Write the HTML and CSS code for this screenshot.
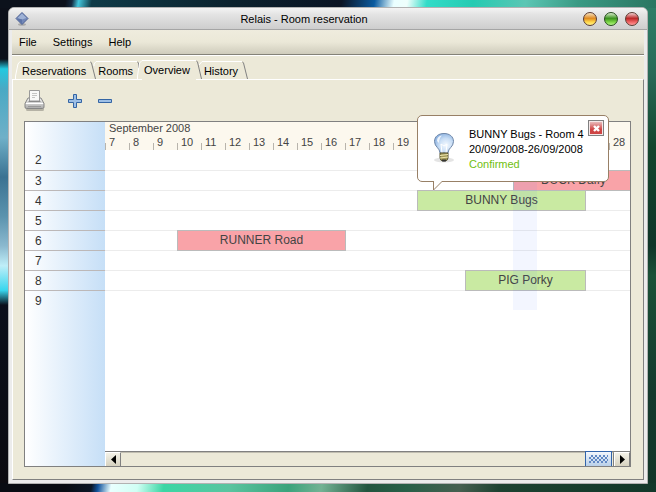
FILE: index.html
```html
<!DOCTYPE html>
<html lang="en">
<head>
<meta charset="utf-8">
<title>Relais - Room reservation</title>
<link rel="stylesheet" href="styles.css">
</head>
<body>
<main class="window">
  <header class="titlebar">
    <svg class="app-icon" width="14" height="14" viewBox="0 0 14 14" aria-hidden="true">
      <ellipse cx="7" cy="12.5" rx="4" ry="1.3" fill="#a9a9a9"/>
      <path d="M7 .5 13 6.500 7 12.500 1 6.500Z" fill="#7388b8" stroke="#4a5f92"/>
      <path d="M7 1.500 11.500 6 7 7.500 2.500 6Z" fill="#9fb2d6"/>
      <path d="M7 7.500V12L2 6.500Z" fill="#5d74a8"/>
    </svg>
    <h1 class="title">Relais - Room reservation</h1>
    <div class="controls">
      <button class="orb amber" aria-label="Minimize"></button>
      <button class="orb green" aria-label="Maximize"></button>
      <button class="orb red" aria-label="Close"></button>
    </div>
  </header>
  <div class="frame">
    <nav class="menubar">
      <button>File</button>
      <button>Settings</button>
      <button>Help</button>
    </nav>
    <div class="tabs">
      <svg width="5" height="18" viewBox="0 0 5 18" aria-hidden="true"><path d="M.5 18V15L3 3 5 .5" fill="none" stroke="#fff"/></svg>
      <button class="tab">Reservations</button>
      <svg width="6" height="18" viewBox="0 0 6 18" aria-hidden="true"><path d="M4 5V3L6 .5" fill="none" stroke="#fff"/><path d="M0 .5 1.500 2 5.500 18" fill="none" stroke="#808080"/></svg>
      <button class="tab">Rooms</button>
      <svg width="5" height="19" viewBox="0 0 5 19" aria-hidden="true"><path d="M0 1.500 1.500 3V8" fill="none" stroke="#808080"/><path d="M.5 19V16L2.500 3 5 .5" fill="none" stroke="#fff"/></svg>
      <button class="tab active">Overview</button>
      <svg width="6" height="19" viewBox="0 0 6 19" aria-hidden="true"><path d="M3 5 6 1.500" fill="none" stroke="#fff"/><path d="M0 .5 1.500 2 5.500 19" fill="none" stroke="#808080"/></svg>
      <button class="tab">History</button>
      <svg width="6" height="18" viewBox="0 0 6 18" aria-hidden="true"><path d="M0 .5 1.500 2 5.500 18" fill="none" stroke="#808080"/></svg>
    </div>
    <section class="panel">
      <div class="toolbar">
        <button class="tool" aria-label="Print">
          <svg width="22" height="22" viewBox="0 0 22 22">
            <defs><linearGradient id="metal" x2="0" y2="1"><stop offset="0" stop-color="#f4f4f4"/><stop offset="1" stop-color="#aaa"/></linearGradient></defs>
            <rect x="2" y="18" width="18" height="3" rx="1.500" fill="#b5b2a5"/>
            <path d="M4 8 1 13.500V17Q1 18.500 2.500 18.500H18.500Q20 18.500 20 17V13.500L17 8Z" fill="url(#metal)" stroke="#858585"/>
            <path d="M5.500 11V.5H15.500V11Z" fill="#f8f8f8" stroke="#999"/>
            <path d="M8 3.500H13M8 5.500H13M8 7.500H11" stroke="#c4c4c4"/>
            <path d="M4.500 11.500H16.500" stroke="#8a8a8a"/>
            <path d="M2 13.500H19" stroke="#fff"/>
            <path d="M4 16.500H17" stroke="#999"/>
          </svg>
        </button>
        <button class="tool zoom-in" aria-label="Zoom in">
          <svg width="14" height="14" viewBox="0 0 14 14"><path d="M5.500.5H8.500V5.500H13.500V8.500H8.500V13.500H5.500V8.500H.5V5.500H5.500Z" fill="#9dbfe6" stroke="#3465a4"/></svg>
        </button>
        <button class="tool zoom-out" aria-label="Zoom out">
          <svg width="14" height="14" viewBox="0 0 14 14"><path d="M.5 5.500H13.500V8.500H.5Z" fill="#9dbfe6" stroke="#3465a4"/></svg>
        </button>
      </div>
      <div class="planner">
        <ul class="rooms">
          <li>2</li><li>3</li><li>4</li><li>5</li><li>6</li><li>7</li><li>8</li><li>9</li>
        </ul>
        <div class="schedule">
          <div class="calendar">
            <div class="dates">
              <div class="month">September 2008</div>
              <ol class="days">
                <li>7</li><li>8</li><li>9</li><li>10</li><li>11</li><li>12</li><li>13</li><li>14</li><li>15</li><li>16</li><li>17</li><li>18</li><li>19</li><li></li><li></li><li></li><li></li><li></li><li></li><li></li><li></li><li>28</li>
              </ol>
            </div>
            <div class="bookings">
              <div class="booking pending duck">DUCK Daffy</div>
              <div class="booking confirmed bunny">BUNNY Bugs</div>
              <div class="booking pending runner">RUNNER Road</div>
              <div class="booking confirmed pig">PIG Porky</div>
              <div class="today"></div>
            </div>
          </div>
          <div class="scrollbar">
            <button class="arrow" aria-label="Scroll left"><svg width="5" height="9" viewBox="0 0 5 9"><path d="M5 0V9L0 4.500Z"/></svg></button>
            <div class="track"><div class="thumb"></div></div>
            <button class="arrow" aria-label="Scroll right"><svg width="5" height="9" viewBox="0 0 5 9"><path d="M0 0V9L5 4.500Z"/></svg></button>
          </div>
          <aside class="tooltip">
            <svg class="bulb" width="26" height="32" viewBox="0 0 26 32" aria-hidden="true">
              <defs><radialGradient id="glass" cx=".6" cy=".6" r=".7"><stop offset="0" stop-color="#f4f9ff"/><stop offset=".5" stop-color="#c9def5"/><stop offset="1" stop-color="#7fa8dc"/></radialGradient></defs>
              <ellipse cx="13" cy="28" rx="10" ry="2.500" fill="#e4e4e4"/>
              <path d="M9 21C9 16 3.500 15 3.500 9.500C3.500 4.500 7.500 1.500 13 1.500S22.500 4.500 22.500 9.500C22.500 15 17 16 17 21Z" fill="url(#glass)" stroke="#6f87a8"/>
              <path d="M6 9Q6 4 11 3.500Q8 6 8 11Z" fill="#fff" opacity=".8"/>
              <path d="M11 21 10 12 13 14 16 12 15 21" fill="none" stroke="#fff"/>
              <path d="M9 21H17V26Q17 29 13 29T9 26Z" fill="#a39a58" stroke="#55512f"/>
              <path d="M9 23.500 17 22.500M9 26 17 25" stroke="#eee6b0"/>
              <path d="M11 28.500H15" stroke="#333" stroke-width="2"/>
            </svg>
            <div class="details">
              <p>BUNNY Bugs - Room 4</p>
              <p>20/09/2008-26/09/2008</p>
              <p class="status">Confirmed</p>
            </div>
            <button class="dismiss" aria-label="Dismiss"><svg width="7" height="7" viewBox="0 0 7 7"><path d="M1 1 6 6M6 1 1 6" stroke="#fff" stroke-width="2.400"/></svg></button>
            <svg class="tail" width="9" height="10" viewBox="0 0 9 10" aria-hidden="true"><path d="M.5 0V9.500L8.500 .5V0Z" fill="#fff"/><path d="M.5 0V9L8.500 1" fill="none" stroke="#988066"/></svg>
          </aside>
        </div>
      </div>
    </section>
  </div>
</main>
</body>
</html>
```
FILE: styles.css
```css
* {
  box-sizing: border-box;
}

body {
  margin: 0;
  min-height: 100vh;
  display: flex;
  padding: 7px 8px 8px;
  font: 11px/16px "Liberation Sans", Arial, sans-serif;
  color: #000;
  background:
    linear-gradient(100deg, #0c121c 10%, #152b42 11%, #43c6dc 12%, #0f3b48 14%, #0b222e 35%, #0a1424 52%, #0a5ba0 57%, #eaffff 60%, #effffc 62%, #32dcc8 65%, #25cbb2 72%, #5bc6b4 80%, #3a9a84 88%, #2b7561) 0 0 / 100% 8px no-repeat,
    linear-gradient(100deg, #090c13 10%, #0b1626 14%, #12539c 15%, #eaffff 17%, #d0fff4 21%, #3bd6a4 25%, #5ac4a0 35%, #3aa37c 44%, #73b294 49%, #22553f 56%, #286048 62%, #465f50 70%, #1d4231 76%, #12382a) 0 100% / 100% 9px no-repeat,
    linear-gradient(#0c101a 12%, #22c9e0 14%, #4aa9c4 18%, #6fb0c8 28%, #3b7292 36%, #5b93ae 44%, #8bb9cf 50%, #bfeef8 54%, #38d6ee 59%, #0c0f1b 62%, #0c0b10) 0 0 / 12px 100% no-repeat,
    linear-gradient(#2f8069, #296a58 15%, #12452d 30%, #103529 50%, #1b5138 56%, #14392d 80%, #123528) 100% 0 / 12px 100% no-repeat;
}

h1, p, ul, ol {
  margin: 0;
  padding: 0;
  font: inherit;
  list-style: none;
}

button {
  margin: 0;
  padding: 0;
  border: 0;
  background: none;
  font: inherit;
  color: inherit;
}

svg {
  display: block;
  flex: none;
}

.window {
  flex: 1;
  min-width: 0;
  display: flex;
  flex-direction: column;
  border: 1px solid #b2b2b2;
  border-radius: 6px 6px 0 0;
  background: #ececec;
}

.titlebar {
  display: flex;
  align-items: center;
  height: 22px;
  padding: 0 8px 0 6px;
  border-bottom: 1px solid #a5a5a5;
  border-radius: 5px 5px 0 0;
  background: linear-gradient(#f4f4f4, #e4e4e4 30%, #cecece);
}

.title {
  flex: 1;
  padding-right: 4px;
  text-align: center;
}

.controls {
  display: flex;
  gap: 7px;
}

.orb {
  width: 14px;
  height: 14px;
  border: 1px solid #5a3a30;
  border-radius: 50%;
}

.amber {
  background: linear-gradient(#f6e2c0, #e08a20 45%, #ffd84a 75%, #fff08a);
}

.green {
  border-color: #244a1c;
  background: linear-gradient(#d8eccc, #3c9420 45%, #7ad444 75%, #b4f48a);
}

.red {
  background: linear-gradient(#f2d0d0, #bc2828 45%, #f06464 75%, #ff9c9c);
}

.frame {
  flex: 1;
  display: flex;
  flex-direction: column;
  margin: 0 3px 3px;
  background: #ece9d8;
}

.menubar {
  display: flex;
  gap: 16px;
  height: 25px;
  padding: 0 7px;
  border-bottom: 1px solid #848278;
  box-shadow: 0 1px #fff;
  background: linear-gradient(#efecde, #ebe8d8 50%, #cfccbc);
}

.tabs {
  display: flex;
  align-items: flex-end;
  height: 24px;
  padding-left: 3px;
}

.tab {
  height: 18px;
  padding: 1px 4px 0 2px;
  border-top: 1px solid #fff;
}

.tab.active {
  position: relative;
  height: 20px;
  margin-bottom: -1px;
  padding: 0 6px 1px 2px;
  background: #ece9d8;
}

.panel {
  flex: 1;
  display: flex;
  flex-direction: column;
  padding: 9px 12px 12px 11px;
  border: 1px solid #fff;
  border-right-color: #808080;
  border-bottom-color: #808080;
}

.toolbar {
  display: flex;
  align-items: center;
  height: 24px;
  margin-bottom: 8px;
}

.zoom-in {
  margin-left: 22px;
}

.zoom-out {
  margin-left: 16px;
}

.planner {
  flex: 1;
  display: flex;
  border: 1px solid #808080;
  background: #fff;
}

.rooms {
  width: 80px;
  padding-top: 28px;
  font-size: 12px;
  line-height: 20px;
  color: #333;
  background: linear-gradient(90deg, #fff, #c6dff7);
}

.rooms li {
  height: 20px;
  padding-left: 10px;
}

.rooms li + li {
  border-top: 1px solid #bcb8b8;
}

.schedule {
  position: relative;
  flex: 1;
  min-width: 0;
  display: flex;
  flex-direction: column;
}

.calendar {
  flex: 1;
  overflow: hidden;
}

.dates {
  height: 28px;
  line-height: 13px;
  color: #444;
  background: #fcf8ee;
}

.month {
  padding-left: 4px;
}

.days {
  display: grid;
  grid-template-columns: repeat(22, 24px);
}

.days li {
  height: 15px;
  padding-left: 4px;
  line-height: 15px;
  background: linear-gradient(#b8b4ac, #b8b4ac) 0 100% / 1px 7px no-repeat;
}

.bookings {
  display: grid;
  grid-template-columns: repeat(22, 24px);
  grid-template-rows: repeat(8, 20px);
  background: linear-gradient(#ececec 1px, transparent 1px) 0 0 / 100% 20px;
  box-shadow: inset 0 1px #fff;
  font-size: 12px;
  line-height: 19px;
  text-align: center;
  color: #444;
}

.booking {
  margin: 0 -1px -1px 0;
  border: 1px solid #bbb;
}

.pending {
  background: #f9a3a8;
}

.confirmed {
  background: #c9eaa2;
}

.duck {
  grid-area: 2 / 18 / auto / span 5;
}

.bunny {
  grid-area: 3 / 14 / auto / span 7;
}

.runner {
  grid-area: 5 / 4 / auto / span 7;
}

.pig {
  grid-area: 7 / 16 / auto / span 5;
}

.today {
  grid-area: 1 / 18 / -1 / span 1;
  background: rgba(80, 130, 255, .07);
}

.scrollbar {
  display: flex;
  height: 15px;
  border-top: 1px solid #808080;
}

.arrow {
  display: grid;
  place-items: center;
  width: 16px;
  border: 1px solid #fff;
  border-right-color: #808080;
  border-bottom: 0;
  background: linear-gradient(#f4f2e8, #d6d2c0);
}

.track {
  flex: 1;
  display: flex;
  justify-content: flex-end;
  padding-right: 1px;
  border-top: 1px solid #c0bdb0;
  border-right: 1px solid #808080;
  background: #ece9d8;
}

.thumb {
  width: 27px;
  margin-top: -2px;
  padding: 3px;
  border: 1px solid #3264aa;
  border-bottom: 0;
  background:
    conic-gradient(#6088c4 25%, transparent 0 50%, #6088c4 0 75%, transparent 0) 0 0 / 4px 4px content-box,
    linear-gradient(#f2f6fc, #b8cfe8);
}

.tooltip {
  position: absolute;
  top: -7px;
  left: 312px;
  display: flex;
  width: 192px;
  height: 67px;
  padding: 11px 13px;
  border: 1px solid #988066;
  border-radius: 5px;
  background: #fff;
}

.bulb {
  margin-top: 5px;
}

.details {
  margin-left: 12px;
  line-height: 15px;
  white-space: nowrap;
}

.status {
  color: #70c010;
}

.dismiss {
  position: absolute;
  top: 4px;
  right: 4px;
  display: grid;
  place-items: center;
  width: 16px;
  height: 16px;
  border: 1px solid #808080;
  box-shadow: inset 0 0 0 1px #f4e8e8;
  background: linear-gradient(#eccaca, #d04646 60%, #c44);
}

.tail {
  position: absolute;
  top: 65px;
  left: 15px;
}
```
